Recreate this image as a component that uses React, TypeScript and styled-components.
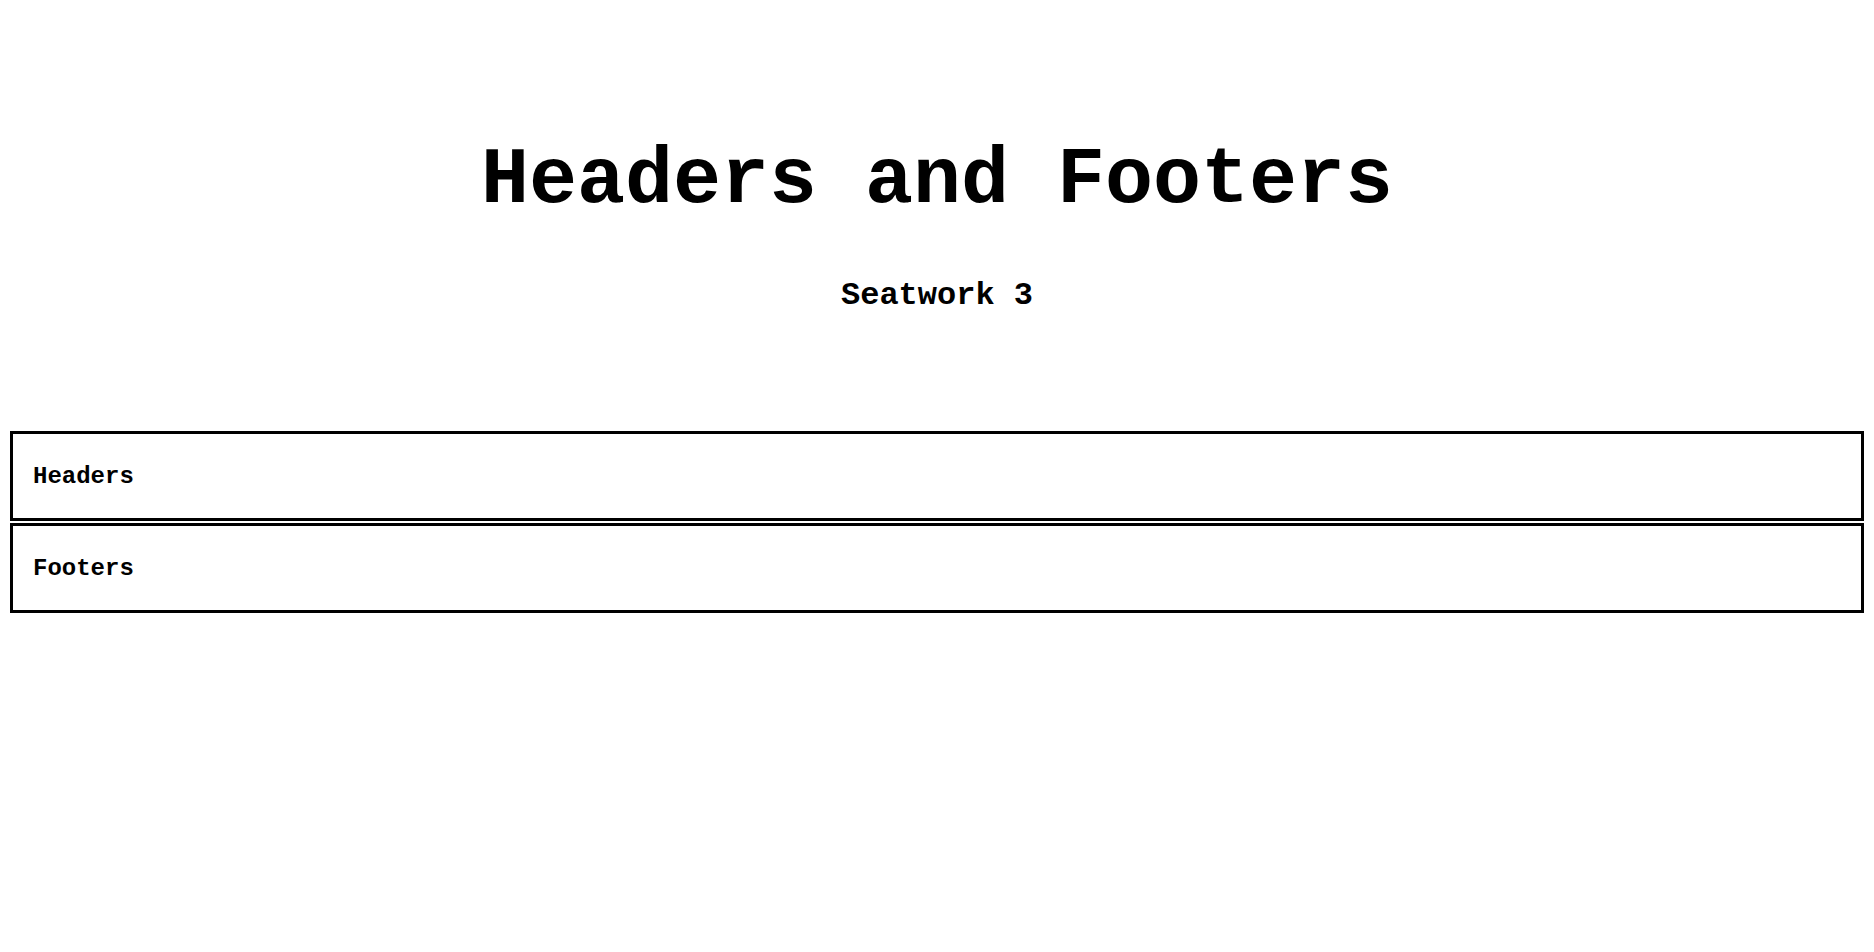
import React from "react";
import styled, { createGlobalStyle } from "styled-components";

const Global = createGlobalStyle`
  html, body { margin: 0; padding: 0; background: #ffffff; }
  body { font-family: "Courier New", "Liberation Mono", monospace; color: #000; }
`;

const Page = styled.div`
  padding: 0 8px;
`;

const Header = styled.header`
  display: flex;
  flex-direction: column;
  align-items: center;
  padding-top: 135px;
`;

const Title = styled.h1`
  margin: 0;
  font-size: 80px;
  font-weight: bold;
  line-height: normal;
`;

const Subtitle = styled.h2`
  margin: 51px 0 0;
  font-size: 32px;
  font-weight: bold;
  line-height: normal;
`;

const Sections = styled.div`
  display: flex;
  flex-direction: column;
  gap: 2px;
  margin: 117px 2px 0;
`;

const Section = styled.div`
  border: 3px solid #000;
  height: 84px;
  display: flex;
  align-items: center;
  padding: 0 20px;
  font-size: 24px;
  font-weight: bold;
`;

export default function App() {
  return (
    <>
      <Global />
      <Page>
        <Header>
          <Title>Headers and Footers</Title>
          <Subtitle>Seatwork 3</Subtitle>
        </Header>
        <Sections>
          <Section>Headers</Section>
          <Section>Footers</Section>
        </Sections>
      </Page>
    </>
  );
}
